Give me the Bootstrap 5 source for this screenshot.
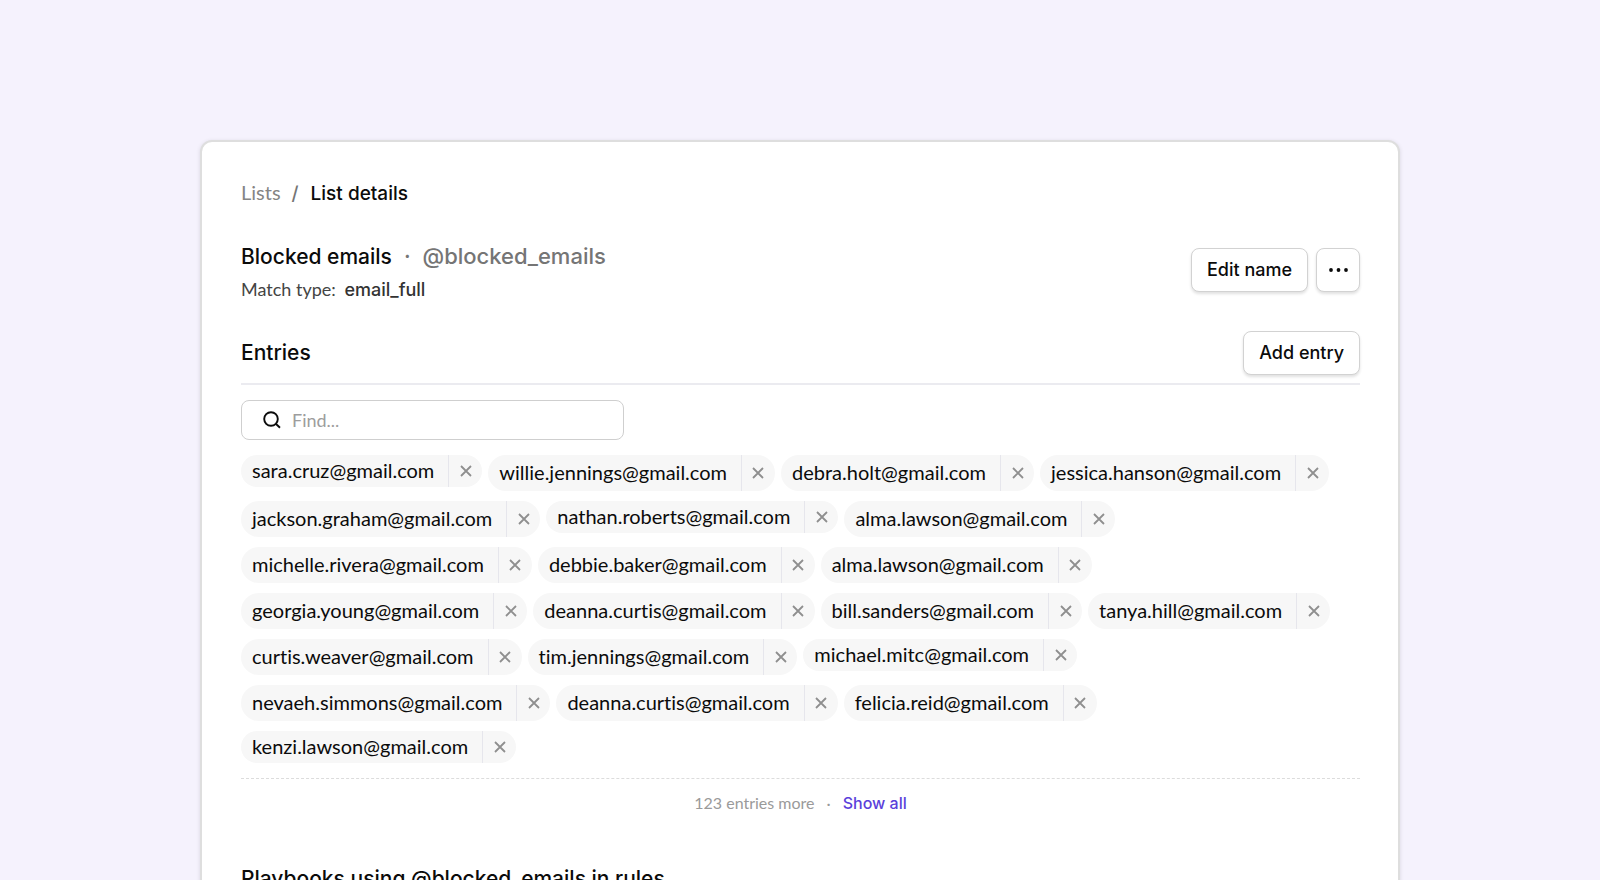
<!DOCTYPE html>
<html lang="en">
<head>
<meta charset="utf-8">
<meta name="viewport" content="width=device-width, initial-scale=1">
<title>List details</title>
<link href="https://cdn.jsdelivr.net/npm/bootstrap@5.3.0/dist/css/bootstrap.min.css" rel="stylesheet">
<style>
  body { background: #f5f2fd; color: #0b0b0b; font-family: Lato, "Open Sans", sans-serif; font-variant-ligatures: none; }
  .page { padding: 140px 12.5% 0; }
  .panel { background: #fff; border: 2px solid #dedede; border-radius: 12px 12px 0 0; box-shadow: 0 1px 4px rgba(0, 0, 0, .12); padding: 36px 38px 80px 39px; }
  .medium, h1, h2, .btn { font-family: Inter, sans-serif; font-weight: 500; }
  .crumbs { font-size: 20px; line-height: 28px; margin-bottom: 32px; }
  .crumbs .breadcrumb-item + .breadcrumb-item { padding-left: 11px; }
  .crumbs .breadcrumb-item + .breadcrumb-item::before { content: "/"; color: #757575; padding-right: 12px; }
  .crumbs a { color: #858585; }
  .crumbs .active { color: #0b0b0b; font-size: 19px; }
  h1, h2 { font-size: 21px; line-height: 32px; margin: 0; }
  .handle { color: #757575; font-size: 22px; }
  .kind { color: #444; font-size: 18px; line-height: 24px; }
  .kind .medium { color: #333; }
  .btn-plain { --bs-btn-padding-x: 15px; --bs-btn-padding-y: 8px; --bs-btn-font-size: 18px; --bs-btn-line-height: 26px; --bs-btn-color: #0b0b0b; --bs-btn-bg: #fff; --bs-btn-border-color: #d2d2d2; --bs-btn-border-radius: 8px; --bs-btn-hover-bg: #f7f7f7; --bs-btn-hover-border-color: #c4c4c4; box-shadow: 0 2px 3px rgba(0, 0, 0, .12); }
  .btn-plain.square { --bs-btn-padding-x: 10px; }
  .entries-head { border-bottom: 2px solid #ebebf0; padding-bottom: 8px; margin-top: 29px; }
  .find { width: 383px; max-width: 100%; margin: 15px 0; border: 1px solid #cfcfcf; border-radius: 8px; padding: 0 16px 0 21px; }
  .find input { font-size: 18px; line-height: 26px; padding: 6px 0 6px 11px; }
  .find input::placeholder { color: #9d9d9d; }
  .chips { column-gap: 6px; row-gap: 10px; }
  .chip { height: 36px; background: #f7f7f7; border-radius: 18px; font-size: 20px; line-height: 24px; }
  .chip.slim { height: 32px; }
  .chip > span { padding: 0 14px 2px 11px; }
  .chip button { width: 34px; border: 0; border-left: 1px solid #e6e6ec; background: none; color: #8f8f8f; padding: 0; }
  .more { border-top: 1px dashed #dcdcdc; margin-top: 15px; padding-top: 12px; font-size: 16px; line-height: 24px; color: #9a9a9a; gap: 12px; }
  .more a { color: #5b3fdb; }
</style>
</head>
<body>
<svg class="d-none" xmlns="http://www.w3.org/2000/svg">
  <symbol id="cross" viewBox="0 0 12 12"><path d="M1 1l10 10M11 1L1 11" fill="none" stroke="currentColor" stroke-width="1.8"/></symbol>
</svg>
<div class="vh-100 overflow-hidden">
<div class="page">
  <main class="panel">
    <nav class="crumbs" aria-label="breadcrumb">
      <ol class="breadcrumb align-items-baseline mb-0">
        <li class="breadcrumb-item"><a class="text-decoration-none" href="#">Lists</a></li>
        <li class="breadcrumb-item active medium" aria-current="page">List details</li>
      </ol>
    </nav>

    <header class="d-flex justify-content-between align-items-start">
      <div>
        <h1 class="d-flex align-items-baseline"><span>Blocked emails</span><span class="handle px-2 mx-1">·</span><span class="handle">@blocked_emails</span></h1>
        <div class="kind mt-1">Match type: <span class="medium ms-1">email_full</span></div>
      </div>
      <div class="d-flex gap-2 mt-2">
        <button type="button" class="btn btn-plain">Edit name</button>
        <button type="button" class="btn btn-plain square d-flex align-items-center" aria-label="More actions">
          <svg width="22" height="6" viewBox="0 0 22 6" fill="#0b0b0b"><circle cx="4" cy="3" r="1.9"/><circle cx="11.500" cy="3" r="1.9"/><circle cx="19" cy="3" r="1.9"/></svg>
        </button>
      </div>
    </header>

    <section>
      <div class="entries-head d-flex justify-content-between align-items-center">
        <h2>Entries</h2>
        <button type="button" class="btn btn-plain">Add entry</button>
      </div>

      <div class="find d-flex align-items-center">
        <svg class="flex-shrink-0" width="18" height="18" viewBox="0 0 18 18" fill="none" stroke="#0b0b0b" stroke-width="1.9"><circle cx="8" cy="8" r="6.8"/><path d="M12.8 12.8l4.2 4"/></svg>
        <input class="form-control border-0 shadow-none bg-transparent" type="text" placeholder="Find..." aria-label="Find an entry">
      </div>

      <div class="chips d-flex flex-wrap align-items-start" id="chips"></div>

      <div class="more d-flex justify-content-center">
        <span>123 entries more</span><span>·</span><a class="medium text-decoration-none" href="#">Show all</a>
      </div>
    </section>

    <section class="mt-5">
      <h2>Playbooks using @blocked_emails in rules</h2>
    </section>
  </main>
</div>
</div>
<script src="https://cdn.jsdelivr.net/npm/bootstrap@5.3.0/dist/js/bootstrap.bundle.min.js"></script>
<script>
  // A leading "-" marks a compact chip.
  const names = ['-sara.cruz', 'willie.jennings', 'debra.holt', 'jessica.hanson', 'jackson.graham', '-nathan.roberts', 'alma.lawson',
    'michelle.rivera', 'debbie.baker', 'alma.lawson', 'georgia.young', 'deanna.curtis', 'bill.sanders', 'tanya.hill',
    'curtis.weaver', 'tim.jennings', '-michael.mitc', 'nevaeh.simmons', 'deanna.curtis', 'felicia.reid', '-kenzi.lawson'];
  document.getElementById('chips').innerHTML = names.map(n => {
    const slim = n[0] === '-', mail = n.replace('-', '') + '@gmail.com';
    return `<div class="chip d-inline-flex align-items-center${slim ? ' slim' : ''}"><span>${mail}</span>` +
      `<button type="button" class="h-100 d-flex align-items-center justify-content-center" aria-label="Remove ${mail}"><svg width="12" height="12"><use href="#cross"/></svg></button></div>`;
  }).join('');
</script>
</body>
</html>
